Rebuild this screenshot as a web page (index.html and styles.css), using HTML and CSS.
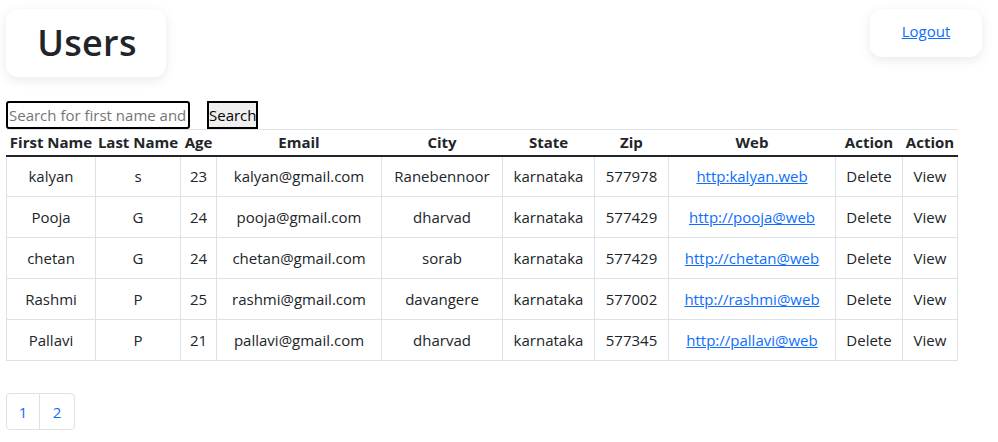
FILE: index.html
```html
<!DOCTYPE html>
<html>
<head>
<meta charset="utf-8">
<link rel="stylesheet" href="styles.css">
</head>
<body>
<div class="page">
  <header class="topbar">
    <div class="card title-card"><h1>Users</h1></div>
    <div class="card logout-card"><a href="#">Logout</a></div>
  </header>
  <div class="search-row">
    <input class="search-input" type="text" placeholder="Search for first name and last name">
    <button class="search-btn">Search</button>
  </div>
  <table class="users">
    <colgroup>
      <col class="c1"><col class="c2"><col class="c3"><col class="c4"><col class="c5">
      <col class="c6"><col class="c7"><col class="c8"><col class="c9"><col class="c10">
    </colgroup>
    <thead>
      <tr><th>First Name</th><th>Last Name</th><th>Age</th><th>Email</th><th>City</th><th>State</th><th>Zip</th><th>Web</th><th>Action</th><th>Action</th></tr>
    </thead>
    <tbody>
      <tr><td>kalyan</td><td>s</td><td>23</td><td>kalyan@gmail.com</td><td>Ranebennoor</td><td>karnataka</td><td>577978</td><td><a href="#">http:kalyan.web</a></td><td>Delete</td><td>View</td></tr>
      <tr><td>Pooja</td><td>G</td><td>24</td><td>pooja@gmail.com</td><td>dharvad</td><td>karnataka</td><td>577429</td><td><a href="#">http://pooja@web</a></td><td>Delete</td><td>View</td></tr>
      <tr><td>chetan</td><td>G</td><td>24</td><td>chetan@gmail.com</td><td>sorab</td><td>karnataka</td><td>577429</td><td><a href="#">http://chetan@web</a></td><td>Delete</td><td>View</td></tr>
      <tr><td>Rashmi</td><td>P</td><td>25</td><td>rashmi@gmail.com</td><td>davangere</td><td>karnataka</td><td>577002</td><td><a href="#">http://rashmi@web</a></td><td>Delete</td><td>View</td></tr>
      <tr><td>Pallavi</td><td>P</td><td>21</td><td>pallavi@gmail.com</td><td>dharvad</td><td>karnataka</td><td>577345</td><td><a href="#">http://pallavi@web</a></td><td>Delete</td><td>View</td></tr>
    </tbody>
  </table>
  <nav class="pager">
    <a href="#" class="page-item">1</a>
    <a href="#" class="page-item">2</a>
  </nav>
</div>
</body>
</html>
```
FILE: styles.css
```css
* { box-sizing: border-box; }
html, body { margin: 0; padding: 0; background: #fff; }
body {
  font-family: "Open Sans", "Noto Sans", sans-serif;
  font-size: 15px;
  color: #212529;
}
.page { padding: 9px 16px 0 6px; }
.topbar {
  display: flex;
  justify-content: space-between;
  align-items: flex-start;
}
.card {
  background: #fff;
  border-radius: 12px;
  box-shadow: 0 3px 12px rgba(0, 0, 0, 0.09);
}
.title-card {
  width: 160px;
  height: 68px;
  display: flex;
  align-items: center;
  justify-content: center;
}
.title-card h1 {
  margin: 0;
  font-size: 36px;
  font-weight: 600;
  line-height: 48px;
  letter-spacing: 0.3px;
  padding-left: 2px;
}
.logout-card {
  width: 112px;
  height: 48px;
  display: flex;
  align-items: center;
  justify-content: center;
  padding-bottom: 4px;
}
a { color: #0d6efd; }
.logout-card a { font-size: 15px; }
.search-row {
  display: flex;
  align-items: center;
  margin-top: 24px;
  height: 28px;
}
.search-input {
  width: 184px;
  height: 28px;
  border: 2px solid #000;
  border-radius: 3px;
  padding: 0 1px;
  font-family: inherit;
  font-size: 15px;
  color: #212529;
}
.search-input::placeholder { color: #757575; }
.search-btn {
  margin-left: 17px;
  width: 51px;
  height: 28px;
  border: 2px solid #000;
  border-radius: 0;
  background: #efefef;
  font-family: inherit;
  font-size: 15px;
  color: #000;
  padding: 0;
}
.users {
  width: 952px;
  table-layout: fixed;
  border-collapse: collapse;
  text-align: center;
}
.c1 { width: 89px; } .c2 { width: 85px; } .c3 { width: 36px; } .c4 { width: 165px; }
.c5 { width: 121px; } .c6 { width: 92px; } .c7 { width: 74px; } .c8 { width: 167px; }
.c9 { width: 67px; } .c10 { width: 55px; }
.users thead tr { border-top: 1px solid #dee2e6; }
.users th {
  font-weight: 700;
  height: 26px;
  padding: 0;
  border-bottom: 2px solid #212529;
  white-space: nowrap;
  line-height: 24px;
}
.users td {
  border: 1px solid #dee2e6;
  height: 41px;
  padding: 0 4px;
  white-space: nowrap;
}
.pager {
  display: flex;
  margin-top: 32px;
}
.page-item {
  width: 34px;
  height: 37px;
  display: flex;
  align-items: center;
  justify-content: center;
  border: 1px solid #dee2e6;
  text-decoration: none;
  color: #0d6efd;
}
.page-item:first-child { border-radius: 4px 0 0 4px; }
.page-item + .page-item { margin-left: -1px; width: 36px; border-radius: 0 4px 4px 0; }
```
